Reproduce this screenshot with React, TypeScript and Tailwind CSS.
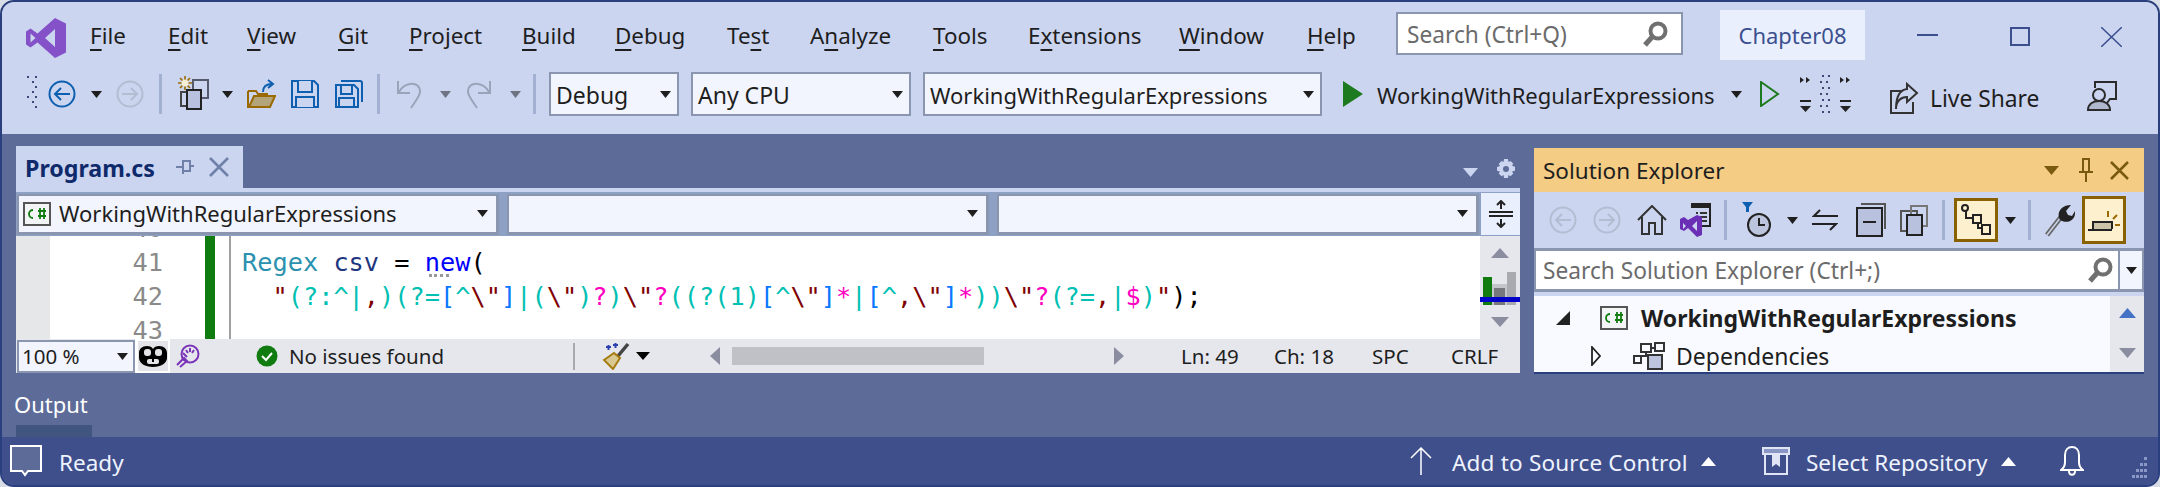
import React from "react";

type P = { className?: string };
const Tri = ({ w = 14, h = 8, c = "#1e1e1e", up = false, className = "" }: { w?: number; h?: number; c?: string; up?: boolean; className?: string }) => (
  <svg width={w} height={h} viewBox="0 0 14 8" preserveAspectRatio="none" className={"shrink-0 " + className}>
    <polygon points={up ? "7,0 14,8 0,8" : "0,0 14,0 7,8"} fill={c} />
  </svg>
);
const Logo = ({ className = "" }: P) => (
  <svg width="40" height="40" viewBox="0 0 40 40" className={className}>
    <path fillRule="evenodd" fill="#8551c9" d="M29 0L40 5.500V34.500L29 40L11.500 24.500L4.500 29.500L0 26.500V13.500L4.500 10.500L11.500 15.500ZM29 11L19 20L29 29ZM4.500 15.500V24.500L9.500 20Z" />
  </svg>
);
const Circ = ({ c, dir = "l", sw = 2, className = "" }: { c: string; dir?: "l" | "r"; sw?: number; className?: string }) => (
  <svg width="28" height="28" viewBox="0 0 28 28" fill="none" stroke={c} strokeWidth={sw} className={"shrink-0 " + className}>
    <circle cx="14" cy="14" r="12.500" />
    {dir === "l" ? <path d="M22 14H7M13 8l-6 6 6 6" /> : <path d="M6 14h15M15 8l6 6-6 6" />}
  </svg>
);
const Grip = ({ className = "" }: P) => (
  <svg width="10" height="36" viewBox="0 0 10 36" fill="#3c4a78" className={className}>
    {[0, 5, 10, 15, 20, 25, 30].map((y, i) => <rect key={y} x={i % 2 ? 5 : i % 4 ? 9 : 0} y={y} width="2" height="2" />)}
    {[0, 10, 20, 30].map((y) => <rect key={y} x="8" y={y} width="2" height="2" />)}
  </svg>
);
const Sep = ({ className = "" }: P) => <div className={"w-[3px] h-[40px] bg-[#a2b0d2] shrink-0 " + className} />;
const NewProj = ({ className = "" }: P) => (
  <svg width="32" height="40" viewBox="0 0 32 40" fill="none" className={"shrink-0 " + className}>
    <path d="M8 2v14M1 9h14M3 4l10 10M13 4L3 14" stroke="#9a6a00" strokeWidth="1.600" />
    <circle cx="8" cy="9" r="3.500" fill="#f5efd8" />
    <rect x="16" y="6" width="15" height="18" stroke="#555b6c" strokeWidth="2" />
    <rect x="4" y="18" width="14" height="14" stroke="#444" strokeWidth="2" />
    <rect x="10" y="16" width="14" height="19" fill="#b8c1de" stroke="#222" strokeWidth="2" />
  </svg>
);
const Folder = ({ className = "" }: P) => (
  <svg width="30" height="30" viewBox="0 0 30 30" fill="none" className={"shrink-0 " + className}>
    <path d="M2 12h8l2 3h9v3" stroke="#9a6a00" strokeWidth="2" />
    <path d="M2 12v16h22l5-11H8L3 28" fill="#b4a47a" stroke="#9a6a00" strokeWidth="2" />
    <path d="M17 13c0-5 3-8 9-8M22 1l5 4-5 4" stroke="#0e5fb0" strokeWidth="2" />
  </svg>
);
const Save = ({ className = "" }: P) => (
  <svg width="28" height="28" viewBox="0 0 28 28" fill="none" stroke="#0e5fb0" strokeWidth="2" className={"shrink-0 " + className}>
    <path d="M1 1h22l4 4v22H1z" fill="#ccd5f0" />
    <path d="M7 1v11h14V1M5 27V17h18v10" fill="#ccd5f0" />
  </svg>
);
const SaveAll = ({ className = "" }: P) => (
  <svg width="28" height="28" viewBox="0 0 28 28" fill="none" stroke="#0e5fb0" strokeWidth="2" className={"shrink-0 " + className}>
    <path d="M6 1h19a2 2 0 0 1 2 2v19" />
    <path d="M1 5h18l4 4v18H1z" fill="#ccd5f0" />
    <path d="M6 5v9h11V5M4 27V18h15v9" />
  </svg>
);
const Undo = ({ flip = false, className = "" }: { flip?: boolean; className?: string }) => (
  <svg width="26" height="30" viewBox="0 0 26 30" fill="none" stroke="#9ba3b8" strokeWidth="2" className={(flip ? "-scale-x-100 " : "") + "shrink-0 " + className}>
    <path d="M2 2v12h12M3 13C8 3 24 1 24 13c0 4-6 11-9 16" />
  </svg>
);
const Combo = ({ t, className = "" }: { t: string; className?: string }) => (
  <div className={"h-[44px] flex items-center justify-between border-2 border-[#8a96b0] bg-[#f2f5fd] pl-[5px] pr-[6px] text-[#1e1e1e] shrink-0 " + className}>
    <span className="mt-[2px]">{t}</span>
    <Tri w={11} h={7} />
  </div>
);
const Step = ({ className = "" }: P) => (
  <svg width="56" height="38" viewBox="0 0 56 38" fill="#222" className={"shrink-0 " + className}>
    <path d="M2 2l4 3-4 3zM8 2l4 3-4 3zM42 2l4 3-4 3zM48 2l4 3-4 3z" />
    <path d="M2 25h11v2H2zM2 31h11l-5.500 6zM42 25h11v2H42zM42 31h11l-5.500 6z" />
    {[0, 6, 12, 18, 24, 30, 36].map((y, i) => <g key={y} fill="#3c4a78"><rect x={i % 2 ? 22 : 24} y={y} width="2" height="2" /><rect x={i % 2 ? 28 : 30} y={y} width="2" height="2" /></g>)}
  </svg>
);
const LiveShare = ({ className = "" }: P) => (
  <svg width="30" height="34" viewBox="0 0 30 34" fill="none" stroke="#333" strokeWidth="2" className={"shrink-0 " + className}>
    <path d="M12 10H2v22h22V21" />
    <path d="M7 28c0-8 5-12 11-12v5l10-9L18 3v5C10 9 7 18 7 28z" fill="#ccd5f0" />
  </svg>
);
const Person = ({ className = "" }: P) => (
  <svg width="30" height="30" viewBox="0 0 30 30" fill="none" stroke="#2b2b2b" strokeWidth="2" className={"shrink-0 " + className}>
    <path d="M8 7V1h21v17h-6l-3 4" />
    <circle cx="12" cy="14" r="6" fill="#ccd5f0" />
    <path d="M1 29c0-6 5-9 11-9s11 3 11 9z" fill="#b0b8cf" />
  </svg>
);
const Cs = ({ className = "" }: P) => (
  <svg width="28" height="24" viewBox="0 0 28 24" className={"shrink-0 " + className}>
    <rect x="1" y="1" width="26" height="22" fill="#f3f4f6" stroke="#555" strokeWidth="2" />
    <path d="M10 8a4 4 0 1 0 0 8M15 9h8M15 14h8M17 6v11M21 6v11" fill="none" stroke="#107c10" strokeWidth="1.800" />
  </svg>
);
const Gear = ({ className = "" }: P) => (
  <svg width="20" height="22" viewBox="0 0 20 20" fill="#ccd5f0" className={className}>
    <path fillRule="evenodd" d="M8 0h4l.5 3 2-1 2.800 2.800-1.300 2 3 1v4l-3 .6 1.300 2-2.800 2.800-2-1.200-.5 3H8l-.5-3-2 1.200-2.800-2.800 1.300-2-3-.6V8l3-1-1.300-2L5.500 2l2 1zM10 7a3 3 0 1 0 0 6 3 3 0 0 0 0-6z" />
  </svg>
);
const Home = ({ className = "" }: P) => (
  <svg width="30" height="30" viewBox="0 0 30 30" fill="none" stroke="#333" strokeWidth="2" className={"shrink-0 " + className}>
    <path d="M1 15L15 1l14 14M5 12v17h7V18h6v11h7V12" />
  </svg>
);
const VsDoc = ({ className = "" }: P) => (
  <svg width="32" height="34" viewBox="0 0 32 34" fill="none" className={"shrink-0 " + className}>
    <path d="M12 1h19v22H20" fill="#ccd5f0" stroke="#222" strokeWidth="2" />
    <path d="M12 2h19v3H12z" fill="#222" />
    <path d="M17 10h2M21 10h7M17 14h2M21 14h7M21 18h7" stroke="#333" strokeWidth="2" />
    <path fillRule="evenodd" fill="#6b2fb5" d="M18 12l5 2v18l-5 2-9-9-4 3-4-2V16l4-2 4 3zM18 18l-5 5 5 5zM4 20v6l3-3z" />
  </svg>
);
const Clock = ({ className = "" }: P) => (
  <svg width="30" height="36" viewBox="0 0 30 36" fill="none" className={"shrink-0 " + className}>
    <path d="M0 0h11L5.500 7z" fill="#0e5fb0" /><path d="M4 5h3v5H4z" fill="#0e5fb0" />
    <circle cx="17" cy="23" r="11" fill="#bcc4de" stroke="#222" strokeWidth="2" />
    <path d="M17 16v7h6" stroke="#222" strokeWidth="2" fill="none" />
  </svg>
);
const Sync = ({ className = "" }: P) => (
  <svg width="26" height="22" viewBox="0 0 26 22" fill="none" stroke="#222" strokeWidth="2" className={"shrink-0 " + className}>
    <path d="M26 7H2l6-6M0 15h24l-6 6" />
  </svg>
);
const Collapse = ({ className = "" }: P) => (
  <svg width="30" height="34" viewBox="0 0 30 34" fill="none" className={"shrink-0 " + className}>
    <path d="M5 1h24v25" stroke="#555" strokeWidth="2" />
    <rect x="1" y="5" width="25" height="28" fill="#b8c1de" stroke="#222" strokeWidth="2" />
    <path d="M7 19h13" stroke="#222" strokeWidth="2" />
  </svg>
);
const Copies = ({ className = "" }: P) => (
  <svg width="28" height="32" viewBox="0 0 28 32" fill="none" className={"shrink-0 " + className}>
    <rect x="1" y="7" width="16" height="20" stroke="#555" strokeWidth="2" />
    <rect x="11" y="2" width="16" height="20" stroke="#777" strokeWidth="2" />
    <rect x="7" y="11" width="15" height="20" fill="#b8c1de" stroke="#222" strokeWidth="2" />
  </svg>
);
const Tree = ({ className = "" }: P) => (
  <svg width="30" height="32" viewBox="0 0 30 32" fill="#fdf0cf" stroke="#222" strokeWidth="2" className={"shrink-0 " + className}>
    <path d="M5 7v7h8M17 19v5h5" fill="none" />
    <circle cx="4" cy="4" r="3" /><rect x="12" y="11" width="8" height="8" /><rect x="21" y="21" width="8" height="9" />
  </svg>
);
const Wrench = ({ className = "" }: P) => (
  <svg width="30" height="34" viewBox="0 0 30 34" fill="none" className={"shrink-0 " + className}>
    <path d="M2 32L16 14" stroke="#666" strokeWidth="5" />
    <path d="M2 32L16 14" stroke="#ccd5f0" strokeWidth="1.500" />
    <path d="M15 17c-4-7 1-15 11-15l-5 6 2 4 4 1 3-5c1 8-6 14-15 9z" fill="#222" />
  </svg>
);
const Preview = ({ className = "" }: P) => (
  <svg width="34" height="26" viewBox="0 0 34 26" fill="none" className={className}>
    <path d="M1 23h24M6 22v-7h19v7" stroke="#222" strokeWidth="2" fill="#ccc4a8" />
    <path d="M21 10V4M26 12l4-4M28 18h5" stroke="#9a6a00" strokeWidth="2" />
  </svg>
);
const Deps = ({ className = "" }: P) => (
  <svg width="32" height="28" viewBox="0 0 32 28" fill="none" stroke="#333" strokeWidth="2" className={"shrink-0 " + className}>
    <rect x="8" y="2" width="10" height="8" /><rect x="22" y="1" width="9" height="8" />
    <rect x="1" y="14" width="7" height="7" /><rect x="15" y="13" width="14" height="14" fill="#bcc4de" />
    <path d="M13 10v4H8M18 6h4" />
  </svg>
);
const Search = ({ c = "#707070", className = "" }: { c?: string; className?: string }) => (
  <svg width="26" height="26" viewBox="0 0 26 26" fill="none" className={"shrink-0 " + className}>
    <circle cx="16" cy="10" r="7.500" stroke={c} strokeWidth="4" />
    <path d="M11 15L3 24" stroke={c} strokeWidth="5" />
  </svg>
);

const Menu = ({ w, a, u, b }: { w: string; a: string; u: string; b: string }) => (
  <span className={"shrink-0 " + w}>{a}<u className="underline decoration-2 underline-offset-[5px]">{u}</u>{b}</span>
);

const Q = "text-[#800000]", G = "text-[#00bfb3]", B = "text-[#0a78ff]", M = "text-[#ff00c0]";
const regex: [string, string][] = [
  ['"', Q], ["(?:^|", G], [",", Q], [")(?=", G], ["[", B], ["^", G], ['\\"', Q], ["]", B], ["|(", G], ['\\"', Q], [")", G], ["?", M], [")", G], ['\\"', Q], ["?", M],
  ["((?(1)", G], ["[", B], ["^", G], ['\\"', Q], ["]", B], ["*", M], ["|", G], ["[", B], ["^", G], [',\\"', Q], ["]", B], ["*", M], ["))", G], ['\\"', Q], ["?", M], ["(?=", G], [",", Q], ["|", G], ["$", M], [")", G], ['"', Q], [");", "text-black"],
];

export default function App() {
  return (
    <div className="w-[2160px] h-[487px] bg-[#d9dde6] font-['Noto_Sans',sans-serif] overflow-hidden">
      <div className="w-full h-full rounded-[14px] border-2 border-[#2a3f7e] bg-[#5d6b99] flex flex-col overflow-hidden">
        <div className="h-[132px] bg-[#ccd5f0] shrink-0">
          <div className="h-[60px] flex items-start">
            <Logo className="ml-[24px] mt-[16px] shrink-0" />
            <div className="ml-[24px] h-[52px] mt-[8px] flex items-center text-[22.4px] text-[#1e1e1e] leading-none">
              <Menu w="w-[78px]" a="" u="F" b="ile" />
              <Menu w="w-[79px]" a="" u="E" b="dit" />
              <Menu w="w-[91px]" a="" u="V" b="iew" />
              <Menu w="w-[71px]" a="" u="G" b="it" />
              <Menu w="w-[113px]" a="" u="P" b="roject" />
              <Menu w="w-[93px]" a="" u="B" b="uild" />
              <Menu w="w-[112px]" a="" u="D" b="ebug" />
              <Menu w="w-[83px]" a="Te" u="s" b="t" />
              <Menu w="w-[123px]" a="A" u="n" b="alyze" />
              <Menu w="w-[95px]" a="" u="T" b="ools" />
              <Menu w="w-[151px]" a="E" u="x" b="tensions" />
              <Menu w="w-[128px]" a="" u="W" b="indow" />
              <Menu w="w-[89px]" a="" u="H" b="elp" />
            </div>
            <div className="mt-[10px] w-[287px] h-[43px] bg-white border-2 border-[#8a96b0] flex items-center justify-between pl-[9px] pr-[13px] text-[22.7px] text-[#6b6b6b] shrink-0">
              <span className="mt-[3px]">Search (Ctrl+Q)</span>
              <Search />
            </div>
            <div className="ml-[37px] mt-[8px] w-[145px] h-[50px] bg-[#e9effd] text-[#3b4f8f] text-[22px] flex items-center justify-center shrink-0">Chapter08</div>
            <div className="ml-[52px] mt-[32px] w-[21px] h-[2px] bg-[#3b4f8f] shrink-0" />
            <div className="ml-[72px] mt-[25px] w-[20px] h-[19px] border-2 border-[#3b4f8f] shrink-0" />
            <svg width="21" height="20" viewBox="0 0 21 20" stroke="#3b4f8f" strokeWidth="1.500" className="ml-[71px] mt-[25px] shrink-0"><path d="M0 0l21 20M21 0L0 20" /></svg>
          </div>
          <div className="h-[64px] flex items-center text-[22px] text-[#1e1e1e]">
            <Grip className="ml-[25px] shrink-0" />
            <Circ c="#0e5fb0" className="ml-[11px]" />
            <Tri w={11} h={7} className="ml-[15px]" />
            <Circ c="#b4bcd2" dir="r" className="ml-[14px]" />
            <Sep className="ml-[15px]" />
            <NewProj className="ml-[15px]" />
            <Tri w={11} h={7} className="ml-[13px]" />
            <Folder className="ml-[13px]" />
            <Save className="ml-[15px]" />
            <SaveAll className="ml-[16px]" />
            <Sep className="ml-[14px]" />
            <Undo className="ml-[16px]" />
            <Tri w={11} h={7} c="#6f7482" className="ml-[18px]" />
            <Undo flip className="ml-[15px]" />
            <Tri w={11} h={7} c="#6f7482" className="ml-[18px]" />
            <Sep className="ml-[12px]" />
            <Combo t="Debug" className="ml-[13px] w-[130px] text-[23px]" />
            <Combo t="Any CPU" className="ml-[12px] w-[220px] text-[23px]" />
            <Combo t="WorkingWithRegularExpressions" className="ml-[12px] w-[399px] text-[22px]" />
            <svg width="20" height="26" viewBox="0 0 20 26" className="ml-[21px] shrink-0"><path d="M0 0l20 13L0 26z" fill="#1e7a1e" /></svg>
            <span className="ml-[14px] mt-[2px] shrink-0 w-[341px] whitespace-nowrap">WorkingWithRegularExpressions</span>
            <Tri w={11} h={7} className="ml-[13px]" />
            <svg width="20" height="26" viewBox="0 0 20 26" fill="none" className="ml-[18px] shrink-0"><path d="M1 1l17 12L1 25z" stroke="#1e7a1e" strokeWidth="2" /></svg>
            <Step className="ml-[18px]" />
            <LiveShare className="ml-[35px] mt-[8px]" />
            <span className="ml-[11px] mt-[10px] w-[107px] whitespace-nowrap text-[22.8px] shrink-0">Live Share</span>
            <Person className="ml-[50px] mt-[4px]" />
          </div>
        </div>

        <div className="flex-1 flex min-h-0 pl-[14px]">
          <div className="w-[1504px] shrink-0 flex flex-col">
            <div className="h-[54px] flex items-end justify-between">
              <div className="w-[227px] h-[42px] bg-[#ccd5f0] flex items-center pl-[9px] shrink-0">
                <span className="font-bold text-[23.200px] text-[#0e2a6b] mt-[2px]">Program.cs</span>
                <svg width="18" height="18" viewBox="0 0 18 18" fill="none" stroke="#6f81a8" strokeWidth="2" className="ml-[21px]"><path d="M0 9h6M7 2v14M7 3h7v10H7M14 8h4" /></svg>
                <svg width="20" height="20" viewBox="0 0 20 20" stroke="#6f81a8" strokeWidth="2.500" className="ml-[15px]"><path d="M1 1l18 18M19 1L1 19" /></svg>
              </div>
              <div className="flex items-center pb-[8px] pr-[4px]">
                <Tri w={15} h={9} c="#ccd5f0" className="mt-[6px]" />
                <Gear className="ml-[18px]" />
              </div>
            </div>
            <div className="h-[4px] bg-[#ccd5f0]" />
            <div className="h-[44px] bg-[#8ea1c5] flex items-center pl-px">
              <div className="w-[482px] h-[41px] border-b-[3px] border-r-[3px] border-t-2 border-l-2 border-[#8a96b0] bg-[#f2f5fd] flex items-center pl-[4px] pr-[8px] text-[22px] text-[#1e1e1e] shrink-0">
                <Cs />
                <span className="ml-[8px] flex-1">WorkingWithRegularExpressions</span>
                <Tri w={11} h={7} />
              </div>
              <div className="ml-[8px] w-[482px] h-[41px] border-b-[3px] border-r-[3px] border-t-2 border-l-2 border-[#8a96b0] bg-[#f2f5fd] flex items-center justify-end pr-[8px] shrink-0"><Tri w={11} h={7} /></div>
              <div className="ml-[8px] w-[482px] h-[41px] border-b-[3px] border-r-[3px] border-t-2 border-l-2 border-[#8a96b0] bg-[#f2f5fd] flex items-center justify-end pr-[8px] shrink-0"><Tri w={11} h={7} /></div>
              <div className="ml-[2px] w-[39px] h-[42px] bg-[#e9effd] flex items-center justify-center shrink-0">
                <svg width="24" height="28" viewBox="0 0 24 28" fill="none" stroke="#222" strokeWidth="2"><path d="M0 12h24M0 16h24M12 9V1M8 5l4-4 4 4M12 19v8M8 23l4 4 4-4" /></svg>
              </div>
            </div>
            <div className="h-[103px] flex bg-white overflow-hidden shrink-0">
              <div className="w-[34px] bg-[#e6e7e8] shrink-0" />
              <div className="w-[113px] -mt-[24px] text-right font-['DejaVu_Sans_Mono',monospace] text-[25.3px] leading-[34px] text-[#8a8a8a] shrink-0">
                <div>40</div><div>41</div><div>42</div><div>43</div>
              </div>
              <div className="ml-[42px] w-[10px] bg-[#107c10] shrink-0" />
              <div className="ml-[14px] w-[2px] bg-[#a0a0a0] shrink-0" />
              <div className="relative ml-[11px] flex-1 -mt-[24px] font-['DejaVu_Sans_Mono',monospace] text-[25.3px] leading-[34px] whitespace-pre text-black">
                <div>&nbsp;</div>
                <div><span className="text-[#2b91af]">Regex</span> <span className="text-[#1f377f]">csv</span> = <span className="text-[#0000ff]">new</span>(</div>
                <div>  {regex.map(([t, c], i) => <span key={i} className={c}>{t}</span>)}</div>
                <div className="absolute left-[187px] top-[62px] w-[20px] h-[3px] border-b-[3px] border-dotted border-[#9a9a9a]" />
              </div>
              <div className="w-[40px] bg-[#e6e7ed] shrink-0 flex flex-col items-center justify-between py-[12px] relative">
                <Tri w={18} h={10} c="#8a8d9f" up />
                <div className="absolute left-0 top-[36px] w-[40px] h-[33px]">
                  <div className="absolute left-[3px] top-[5px] w-[9px] h-[28px] bg-[#107c10]" />
                  <div className="absolute left-[12px] top-[12px] w-[15px] h-[21px] bg-[#c4c5cb]" />
                  <div className="absolute left-[14px] top-[16px] w-[11px] h-[17px] bg-[#77787e]" />
                  <div className="absolute left-[27px] top-0 w-[9px] h-[33px] bg-[#a9aab0]" />
                  <div className="absolute left-0 top-[25px] w-[40px] h-[5px] bg-[#0000c8]" />
                </div>
                <Tri w={18} h={10} c="#8a8d9f" />
              </div>
            </div>
            <div className="h-[34px] bg-[#e6e7ed] flex items-center text-[20.5px] text-[#1e1e1e] shrink-0">
              <div className="w-[118px] h-[33px] ml-px border-2 border-[#8a96b0] bg-[#f2f5fd] flex items-center justify-between pl-[3px] pr-[5px] shrink-0">
                <span>100 %</span><Tri w={11} h={7} />
              </div>
              <div className="w-[35px] h-[34px] bg-white flex items-center pl-[3px] pr-[2px] shrink-0">
                <div className="w-[30px] h-[30px] bg-[#e4e4e8] flex items-center justify-center">
                  <svg width="28" height="21" viewBox="0 0 28 21" className="shrink-0">
                    <path d="M8 0c3 0 5 1 6 3 1-2 3-3 6-3 5 0 8 3 8 7v5c0 5-6 9-14 9S0 17 0 12V7c0-4 3-7 8-7z" fill="#000" />
                    <rect x="5" y="3" width="7" height="7" rx="3" fill="#e4e4e8" />
                    <rect x="16" y="3" width="7" height="7" rx="3" fill="#e4e4e8" />
                    <rect x="8" y="13" width="12" height="5" rx="2" fill="#e4e4e8" />
                    <rect x="13" y="13" width="2" height="3" fill="#000" />
                  </svg>
                </div>
              </div>
              <svg width="24" height="24" viewBox="0 0 24 24" fill="none" stroke="#7b35b8" strokeWidth="2" className="ml-[6px] shrink-0"><circle cx="14" cy="10" r="8.500" /><path d="M1 21L8 14l3 3-7 6M7 9l4 4M14 4v4M10 6l2 3M18 6l-2 3" /></svg>
              <svg width="22" height="22" viewBox="0 0 22 22" className="ml-[56px] shrink-0"><circle cx="11" cy="11" r="10.500" fill="#107c10" /><path d="M6 11l4 4 6-7" fill="none" stroke="#fff" strokeWidth="2" /></svg>
              <span className="ml-[11px] w-[284px] shrink-0">No issues found</span>
              <div className="w-[2px] h-[27px] bg-[#a9aab0] shrink-0" />
              <svg width="28" height="28" viewBox="0 0 28 28" fill="none" className="ml-[27px] shrink-0"><path d="M16 14L26 2" stroke="#444" strokeWidth="3.500" /><path d="M2 18l10-7 6 5-7 11z" fill="#d9c892" stroke="#a67c10" strokeWidth="2" /><path d="M4 5h5M6.500 3v5M11 3h5M13.500 1v5" stroke="#2a3fb0" strokeWidth="2" /></svg>
              <Tri w={14} h={8} c="#000" className="ml-[6px]" />
              <svg width="10" height="18" viewBox="0 0 10 18" className="ml-[60px] shrink-0"><path d="M10 0v18L0 9z" fill="#8a8d9f" /></svg>
              <div className="ml-[12px] w-[252px] h-[18px] bg-[#c0c1c6] shrink-0" />
              <svg width="10" height="18" viewBox="0 0 10 18" className="ml-[130px] shrink-0"><path d="M0 0v18L10 9z" fill="#8a8d9f" /></svg>
              <span className="ml-[57px] w-[93px] shrink-0">Ln: 49</span>
              <span className="w-[98px] shrink-0">Ch: 18</span>
              <span className="w-[79px] shrink-0">SPC</span>
              <span className="shrink-0">CRLF</span>
            </div>
            <div className="flex-1 relative">
              <span className="absolute -left-[2px] top-[16px] text-white text-[22px] leading-[30px]">Output</span>
              <div className="absolute left-0 bottom-0 w-[76px] h-[12px] bg-[#415581]" />
            </div>
          </div>

          <div className="ml-[14px] mt-[14px] w-[610px] h-[225px] flex flex-col shrink-0">
            <div className="h-[44px] bg-[#f5cc84] flex items-center pl-[9px] text-[22.5px] text-[#1e1e1e] shrink-0">
              <span className="flex-1 mt-[2px]">Solution Explorer</span>
              <Tri w={15} h={9} c="#7a5a10" />
              <svg width="14" height="24" viewBox="0 0 14 24" fill="none" stroke="#7a5a10" strokeWidth="2" className="ml-[20px]"><path d="M3 1h8M4 1v12M10 1v12M0 14h14M7 14v10" /></svg>
              <svg width="19" height="19" viewBox="0 0 19 19" stroke="#7a5a10" strokeWidth="2.500" className="ml-[17px] mr-[15px]"><path d="M1 1l17 17M18 1L1 18" /></svg>
            </div>
            <div className="h-[56px] bg-[#ccd5f0] flex items-center shrink-0">
              <Circ c="#b4bcd2" className="ml-[15px]" />
              <Circ c="#b4bcd2" dir="r" className="ml-[16px]" />
              <Home className="ml-[16px]" />
              <VsDoc className="ml-[12px]" />
              <Sep className="ml-[13px]" />
              <Clock className="ml-[15px]" />
              <Tri w={11} h={7} className="ml-[15px]" />
              <Sync className="ml-[14px]" />
              <Collapse className="ml-[18px]" />
              <Copies className="ml-[14px]" />
              <Sep className="ml-[14px]" />
              <div className="ml-[9px] w-[44px] h-[44px] border-[3px] border-[#8a6100] bg-[#fdf0cf] flex items-center justify-center shrink-0"><Tree /></div>
              <Tri w={11} h={7} className="ml-[7px]" />
              <Sep className="ml-[12px]" />
              <Wrench className="ml-[14px]" />
              <div className="ml-[7px] w-[44px] h-[48px] border-[3px] border-[#8a6100] bg-[#fdf0cf] flex items-center justify-center shrink-0"><Preview /></div>
            </div>
            <div className="h-[44px] bg-white border-y-[3px] border-x-2 border-[#8a96b0] flex items-center text-[22.7px] text-[#6b6b6b] shrink-0">
              <span className="ml-[7px] mt-[2px] flex-1">Search Solution Explorer (Ctrl+;)</span>
              <Search className="mr-[5px]" />
              <div className="w-[24px] h-full bg-[#f2f5fd] border-l-2 border-[#8a96b0] flex items-center justify-center shrink-0"><Tri w={11} h={7} /></div>
            </div>
            <div className="h-[4px] bg-[#ccd5f0] shrink-0" />
            <div className="flex-1 flex bg-[#f9faff] border-b-2 border-[#2a3f7e] text-[23px] text-[#1e1e1e]">
              <div className="flex-1 flex flex-col">
                <div className="h-[44px] flex items-center">
                  <svg width="14" height="14" viewBox="0 0 14 14" className="ml-[22px] shrink-0"><path d="M14 0v14H0z" fill="#222" /></svg>
                  <Cs className="ml-[30px]" />
                  <span className="ml-[13px] font-bold">WorkingWithRegularExpressions</span>
                </div>
                <div className="h-[32px] flex items-center">
                  <svg width="10" height="20" viewBox="0 0 10 20" fill="none" stroke="#222" strokeWidth="1.800" className="ml-[57px] shrink-0"><path d="M1 1l8 9-8 9z" /></svg>
                  <Deps className="ml-[32px]" />
                  <span className="ml-[11px]">Dependencies</span>
                </div>
              </div>
              <div className="w-[34px] bg-[#e6e7ed] flex flex-col items-center justify-between pt-[12px] pb-[14px] shrink-0">
                <Tri w={17} h={10} c="#4472c4" up />
                <Tri w={17} h={10} c="#8a8d9f" />
              </div>
            </div>
          </div>
        </div>

        <div className="h-[48px] bg-[#3f4f8c] flex items-center text-[22.5px] text-[#eef3ff] shrink-0">
          <svg width="32" height="32" viewBox="0 0 32 32" fill="#5d6b99" stroke="#fff" strokeWidth="2" className="ml-[8px] shrink-0"><path d="M1 1h30v25H18l-3 4-3-4H1z" /></svg>
          <span className="ml-[17px] mt-[3px] w-[1330px] shrink-0">Ready</span>
          <svg width="22" height="28" viewBox="0 0 22 28" fill="none" stroke="#fff" strokeWidth="1.500" className="ml-[21px] shrink-0"><path d="M11 28V1M1 11L11 1l10 10" /></svg>
          <span className="ml-[20px] mt-[3px] w-[236px] tracking-[0.2px] whitespace-nowrap shrink-0">Add to Source Control</span>
          <Tri w={15} h={9} c="#fff" up className="ml-[13px]" />
          <svg width="28" height="28" viewBox="0 0 28 28" fill="none" className="ml-[46px] shrink-0"><path d="M1 1h26v6H1z" fill="#8a97c5" stroke="#dfe5f5" strokeWidth="2" /><path d="M3 7v20h22V7" stroke="#dfe5f5" strokeWidth="2" /><path d="M10 8h8v12l-4-3-4 3z" fill="#dfe5f5" /></svg>
          <span className="ml-[16px] mt-[3px] w-[181px] whitespace-nowrap shrink-0">Select Repository</span>
          <Tri w={15} h={9} c="#fff" up className="ml-[14px]" />
          <svg width="24" height="30" viewBox="0 0 24 30" fill="none" stroke="#fff" strokeWidth="2" className="ml-[44px] shrink-0"><path d="M1 24c3-2 4-4 4-8V9c0-5 3-8 7-8s7 3 7 8v7c0 4 1 6 4 8zM9 25c0 5 6 5 6 0" /></svg>
          <svg width="16" height="22" viewBox="0 0 16 22" fill="#8a97c5" className="ml-[48px] mt-[14px] shrink-0"><path d="M12 0h3v3h-3zM8 6h3v3H8zM12 6h3v3h-3zM4 12h3v3H4zM8 12h3v3H8zM12 12h3v3h-3zM0 18h3v3H0zM4 18h3v3H4zM8 18h3v3H8zM12 18h3v3h-3z" /></svg>
        </div>
      </div>
    </div>
  );
}
